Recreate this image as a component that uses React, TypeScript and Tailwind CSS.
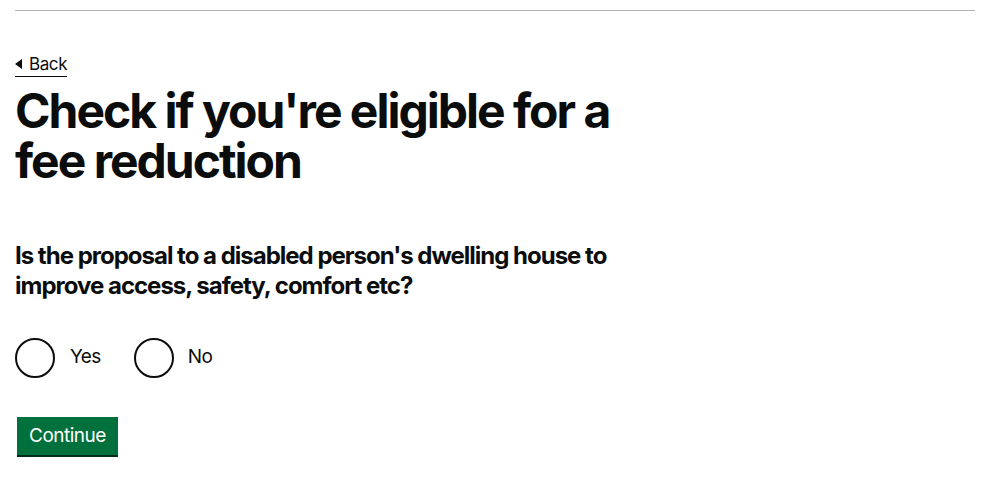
export default function App() {
  return (
    <div className="min-h-screen bg-white text-[#0b0c0c]" style={{ fontFamily: 'Inter, "Liberation Sans", Arial, sans-serif' }}>
      <div className="mx-[15px] pt-[10px]">
        <div className="border-t border-[#b1b4b6]" />
        <div className="pt-[40px]">
          <a href="#" className="inline-flex items-center gap-[7px] text-[17px] leading-[21px] text-[#0b0c0c] border-b border-[#0b0c0c] pb-[1px] tracking-[-0.4px]">
            <span className="inline-block w-0 h-0 border-y-[5px] border-y-transparent border-r-[7px] border-r-[#0b0c0c]" />
            Back
          </a>
        </div>
        <div className="w-[610px] mt-[9px]">
          <h1 className="text-[48px] leading-[50px] font-bold tracking-[-2px]">
            Check if you're eligible for a fee reduction
          </h1>
          <h2 className="mt-[55px] text-[24px] leading-[30px] font-bold tracking-[-1px]">
            Is the proposal to a disabled person's dwelling house to improve access, safety, comfort etc?
          </h2>
          <div className="mt-[37px] flex items-center gap-[15px] tracking-[-0.6px]">
            <label className="flex items-center">
              <span className="w-[40px] h-[40px] rounded-full border-2 border-[#0b0c0c]" />
              <span className="pl-[15px] pr-[18px] text-[19px]">Yes</span>
            </label>
            <label className="flex items-center">
              <span className="w-[40px] h-[40px] rounded-full border-2 border-[#0b0c0c]" />
              <span className="pl-[14px] text-[19px]">No</span>
            </label>
          </div>
          <button className="mt-[39px] ml-[2px] h-[38px] px-[12px] pt-[2px] bg-[#00703c] text-white text-[19px] tracking-[-0.5px] shadow-[0_2px_0_#002d18]">
            Continue
          </button>
        </div>
      </div>
    </div>
  );
}
